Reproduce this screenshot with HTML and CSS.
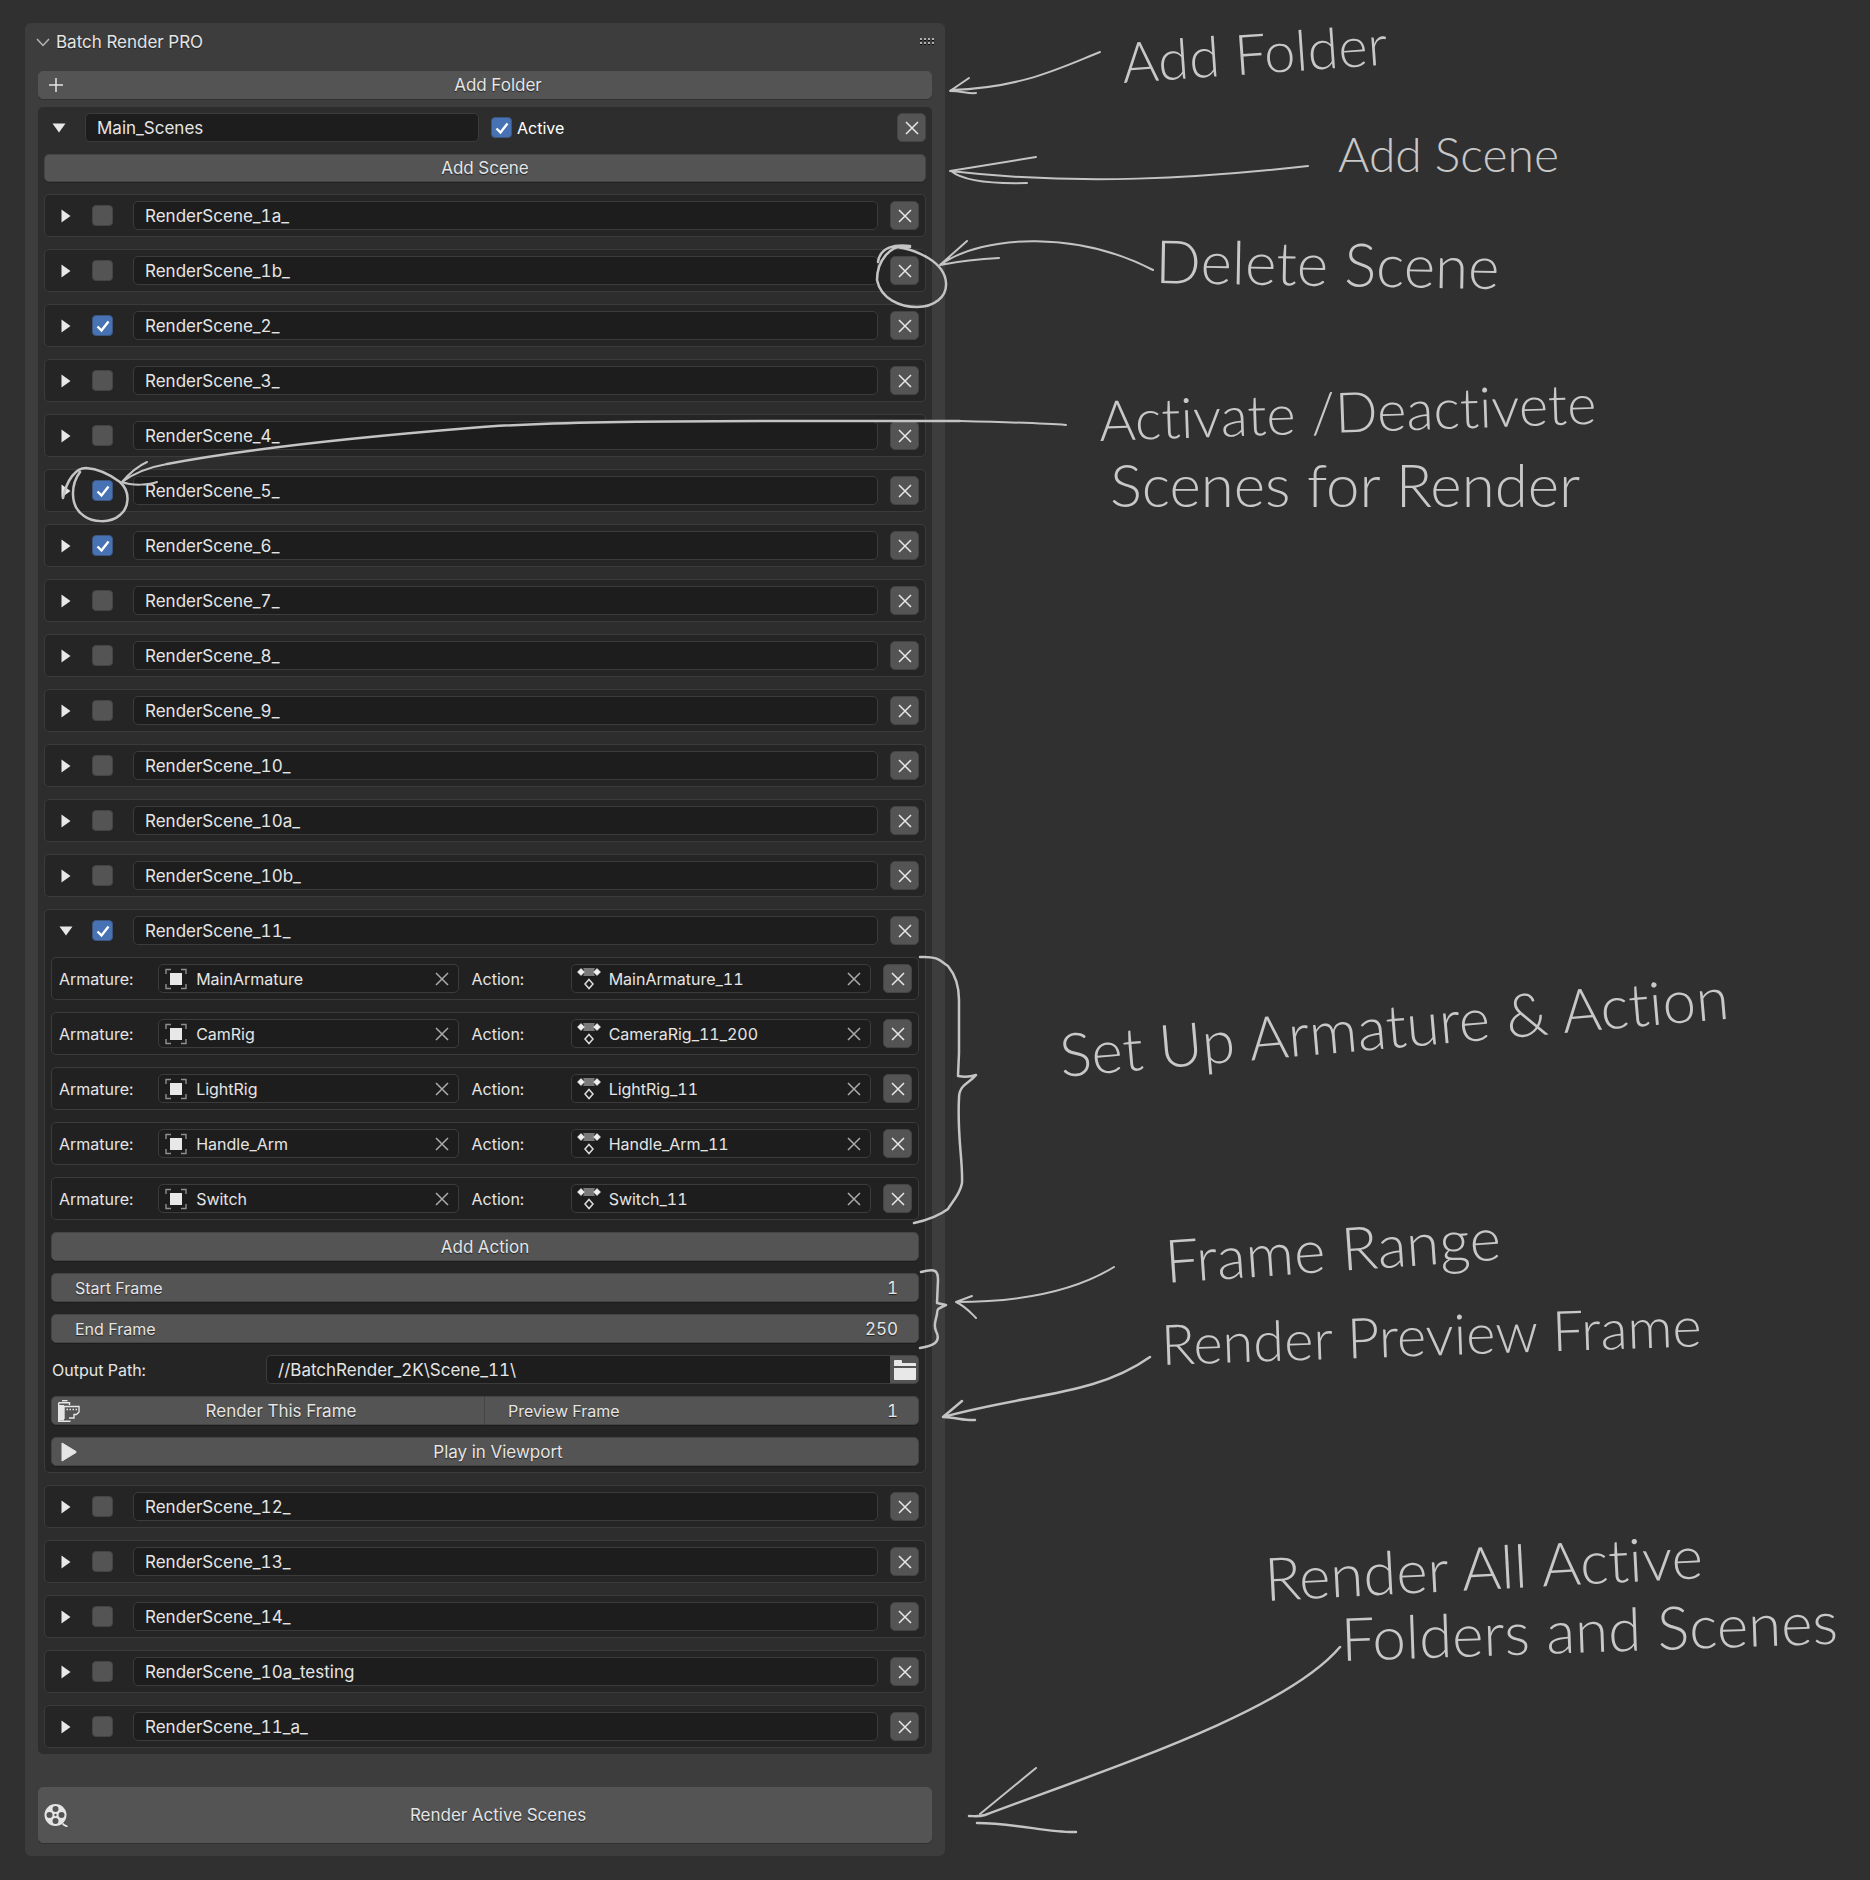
FILE: index.html
```html
<!DOCTYPE html>
<html lang="en">
<head>
<meta charset="utf-8">
<title>Batch Render PRO</title>
<meta name="viewport" content="width=device-width, initial-scale=1">
<link rel="stylesheet" href="styles.css">
</head>
<body>
<svg class="sprite" aria-hidden="true">
  <symbol id="x" viewBox="0 0 14 14"><path d="M1 1 13 13M13 1 1 13" fill="none" stroke="currentColor" stroke-width="1.5"/></symbol>
  <symbol id="right" viewBox="0 0 10 14"><path d="M.5 .5 9.5 7 .5 13.5Z" fill="currentColor"/></symbol>
  <symbol id="down" viewBox="0 0 14 10"><path d="M.5 .5H13.5L7 9.5Z" fill="currentColor"/></symbol>
  <symbol id="object" viewBox="0 0 24 22"><path d="M7 1.5H2V6M17 1.5h5V6M2 16v4.5h5M22 16v4.5h-5" fill="none" stroke="#8f8f8f" stroke-width="1.4"/><rect x="6" y="5" width="12" height="12" fill="#e8e8e8"/></symbol>
  <symbol id="action" viewBox="0 0 24 22"><path d="M6 0H18Q15.500 4 18 8H6Q8.500 4 6 0Z" fill="#7a7a7a"/><path d="M4 .5 7.500 4 4 7.500 .5 4ZM20 .5 23.500 4 20 7.500 16.500 4Z" fill="#f0f0f0" stroke="#f0f0f0" stroke-width=".6" stroke-linejoin="round"/><path d="M12 11.500 16 16 12 20.500 8 16Z" fill="none" stroke="#dcdcdc" stroke-width="1.500"/></symbol>
</svg>

<main class="workspace">
<section class="panel" aria-labelledby="panel-title">
  <header class="panel-header">
    <svg class="chevron" viewBox="0 0 14 9" aria-hidden="true"><path d="M1 1 7 7.500 13 1" fill="none" stroke="#b5b5b5" stroke-width="1.500"/></svg>
    <h1 class="panel-title" id="panel-title">Batch Render PRO</h1>
    <svg class="grip" viewBox="0 0 14 8" aria-hidden="true"><path d="M0 1h14M0 5h14" stroke="#b0b0b0" stroke-width="2" stroke-dasharray="2 2"/><path d="M0 2.500h14M0 6.500h14" stroke="#111" stroke-dasharray="2 2"/></svg>
  </header>

  <button class="button button-top with-icon" type="button"><span class="button-icon"><svg width="14" height="14" viewBox="0 0 14 14"><path d="M7 0V14M0 7H14" stroke="currentColor" stroke-width="1.500"/></svg></span><span class="button-text">Add Folder</span></button>

  <div class="folder">
    <div class="folder-header">
      <button class="toggle" type="button" aria-label="Collapse folder"><svg width="14" height="10"><use href="#down"/></svg></button>
      <input class="field" type="text" value="Main_Scenes" aria-label="Folder name">
      <label class="active"><input class="check" type="checkbox" checked>Active</label>
      <button class="remove" type="button" aria-label="Delete folder"><svg width="14" height="14"><use href="#x"/></svg></button>
    </div>
    <button class="button button-top" type="button"><span class="button-text">Add Scene</span></button>

    <div class="scene"><div class="scene-row"><button class="toggle" type="button" aria-label="Expand"><svg width="10" height="14"><use href="#right"/></svg></button><input class="check" type="checkbox" aria-label="Render scene"><input class="field" type="text" value="RenderScene_1a_" aria-label="Scene name"><button class="remove" type="button" aria-label="Delete scene"><svg width="14" height="14"><use href="#x"/></svg></button></div></div>
    <div class="scene"><div class="scene-row"><button class="toggle" type="button" aria-label="Expand"><svg width="10" height="14"><use href="#right"/></svg></button><input class="check" type="checkbox" aria-label="Render scene"><input class="field" type="text" value="RenderScene_1b_" aria-label="Scene name"><button class="remove" type="button" aria-label="Delete scene"><svg width="14" height="14"><use href="#x"/></svg></button></div></div>
    <div class="scene"><div class="scene-row"><button class="toggle" type="button" aria-label="Expand"><svg width="10" height="14"><use href="#right"/></svg></button><input class="check" type="checkbox" checked aria-label="Render scene"><input class="field" type="text" value="RenderScene_2_" aria-label="Scene name"><button class="remove" type="button" aria-label="Delete scene"><svg width="14" height="14"><use href="#x"/></svg></button></div></div>
    <div class="scene"><div class="scene-row"><button class="toggle" type="button" aria-label="Expand"><svg width="10" height="14"><use href="#right"/></svg></button><input class="check" type="checkbox" aria-label="Render scene"><input class="field" type="text" value="RenderScene_3_" aria-label="Scene name"><button class="remove" type="button" aria-label="Delete scene"><svg width="14" height="14"><use href="#x"/></svg></button></div></div>
    <div class="scene"><div class="scene-row"><button class="toggle" type="button" aria-label="Expand"><svg width="10" height="14"><use href="#right"/></svg></button><input class="check" type="checkbox" aria-label="Render scene"><input class="field" type="text" value="RenderScene_4_" aria-label="Scene name"><button class="remove" type="button" aria-label="Delete scene"><svg width="14" height="14"><use href="#x"/></svg></button></div></div>
    <div class="scene"><div class="scene-row"><button class="toggle" type="button" aria-label="Expand"><svg width="10" height="14"><use href="#right"/></svg></button><input class="check" type="checkbox" checked aria-label="Render scene"><input class="field" type="text" value="RenderScene_5_" aria-label="Scene name"><button class="remove" type="button" aria-label="Delete scene"><svg width="14" height="14"><use href="#x"/></svg></button></div></div>
    <div class="scene"><div class="scene-row"><button class="toggle" type="button" aria-label="Expand"><svg width="10" height="14"><use href="#right"/></svg></button><input class="check" type="checkbox" checked aria-label="Render scene"><input class="field" type="text" value="RenderScene_6_" aria-label="Scene name"><button class="remove" type="button" aria-label="Delete scene"><svg width="14" height="14"><use href="#x"/></svg></button></div></div>
    <div class="scene"><div class="scene-row"><button class="toggle" type="button" aria-label="Expand"><svg width="10" height="14"><use href="#right"/></svg></button><input class="check" type="checkbox" aria-label="Render scene"><input class="field" type="text" value="RenderScene_7_" aria-label="Scene name"><button class="remove" type="button" aria-label="Delete scene"><svg width="14" height="14"><use href="#x"/></svg></button></div></div>
    <div class="scene"><div class="scene-row"><button class="toggle" type="button" aria-label="Expand"><svg width="10" height="14"><use href="#right"/></svg></button><input class="check" type="checkbox" aria-label="Render scene"><input class="field" type="text" value="RenderScene_8_" aria-label="Scene name"><button class="remove" type="button" aria-label="Delete scene"><svg width="14" height="14"><use href="#x"/></svg></button></div></div>
    <div class="scene"><div class="scene-row"><button class="toggle" type="button" aria-label="Expand"><svg width="10" height="14"><use href="#right"/></svg></button><input class="check" type="checkbox" aria-label="Render scene"><input class="field" type="text" value="RenderScene_9_" aria-label="Scene name"><button class="remove" type="button" aria-label="Delete scene"><svg width="14" height="14"><use href="#x"/></svg></button></div></div>
    <div class="scene"><div class="scene-row"><button class="toggle" type="button" aria-label="Expand"><svg width="10" height="14"><use href="#right"/></svg></button><input class="check" type="checkbox" aria-label="Render scene"><input class="field" type="text" value="RenderScene_10_" aria-label="Scene name"><button class="remove" type="button" aria-label="Delete scene"><svg width="14" height="14"><use href="#x"/></svg></button></div></div>
    <div class="scene"><div class="scene-row"><button class="toggle" type="button" aria-label="Expand"><svg width="10" height="14"><use href="#right"/></svg></button><input class="check" type="checkbox" aria-label="Render scene"><input class="field" type="text" value="RenderScene_10a_" aria-label="Scene name"><button class="remove" type="button" aria-label="Delete scene"><svg width="14" height="14"><use href="#x"/></svg></button></div></div>
    <div class="scene"><div class="scene-row"><button class="toggle" type="button" aria-label="Expand"><svg width="10" height="14"><use href="#right"/></svg></button><input class="check" type="checkbox" aria-label="Render scene"><input class="field" type="text" value="RenderScene_10b_" aria-label="Scene name"><button class="remove" type="button" aria-label="Delete scene"><svg width="14" height="14"><use href="#x"/></svg></button></div></div>

    <div class="scene">
      <div class="scene-row"><button class="toggle" type="button" aria-label="Collapse"><svg width="14" height="10"><use href="#down"/></svg></button><input class="check" type="checkbox" checked aria-label="Render scene"><input class="field" type="text" value="RenderScene_11_" aria-label="Scene name"><button class="remove" type="button" aria-label="Delete scene"><svg width="14" height="14"><use href="#x"/></svg></button></div>

      <div class="binding">
        <div class="pair"><label for="arm1">Armature:</label><div class="picker"><svg width="24" height="22"><use href="#object"/></svg><input id="arm1" type="text" value="MainArmature"><button class="clear" type="button" aria-label="Clear"><svg width="14" height="14"><use href="#x"/></svg></button></div></div>
        <div class="pair"><label for="act1">Action:</label><div class="picker"><svg width="24" height="22"><use href="#action"/></svg><input id="act1" type="text" value="MainArmature_11"><button class="clear" type="button" aria-label="Clear"><svg width="14" height="14"><use href="#x"/></svg></button></div></div>
        <button class="remove" type="button" aria-label="Delete action"><svg width="14" height="14"><use href="#x"/></svg></button>
      </div>
      <div class="binding">
        <div class="pair"><label for="arm2">Armature:</label><div class="picker"><svg width="24" height="22"><use href="#object"/></svg><input id="arm2" type="text" value="CamRig"><button class="clear" type="button" aria-label="Clear"><svg width="14" height="14"><use href="#x"/></svg></button></div></div>
        <div class="pair"><label for="act2">Action:</label><div class="picker"><svg width="24" height="22"><use href="#action"/></svg><input id="act2" type="text" value="CameraRig_11_200"><button class="clear" type="button" aria-label="Clear"><svg width="14" height="14"><use href="#x"/></svg></button></div></div>
        <button class="remove" type="button" aria-label="Delete action"><svg width="14" height="14"><use href="#x"/></svg></button>
      </div>
      <div class="binding">
        <div class="pair"><label for="arm3">Armature:</label><div class="picker"><svg width="24" height="22"><use href="#object"/></svg><input id="arm3" type="text" value="LightRig"><button class="clear" type="button" aria-label="Clear"><svg width="14" height="14"><use href="#x"/></svg></button></div></div>
        <div class="pair"><label for="act3">Action:</label><div class="picker"><svg width="24" height="22"><use href="#action"/></svg><input id="act3" type="text" value="LightRig_11"><button class="clear" type="button" aria-label="Clear"><svg width="14" height="14"><use href="#x"/></svg></button></div></div>
        <button class="remove" type="button" aria-label="Delete action"><svg width="14" height="14"><use href="#x"/></svg></button>
      </div>
      <div class="binding">
        <div class="pair"><label for="arm4">Armature:</label><div class="picker"><svg width="24" height="22"><use href="#object"/></svg><input id="arm4" type="text" value="Handle_Arm"><button class="clear" type="button" aria-label="Clear"><svg width="14" height="14"><use href="#x"/></svg></button></div></div>
        <div class="pair"><label for="act4">Action:</label><div class="picker"><svg width="24" height="22"><use href="#action"/></svg><input id="act4" type="text" value="Handle_Arm_11"><button class="clear" type="button" aria-label="Clear"><svg width="14" height="14"><use href="#x"/></svg></button></div></div>
        <button class="remove" type="button" aria-label="Delete action"><svg width="14" height="14"><use href="#x"/></svg></button>
      </div>
      <div class="binding">
        <div class="pair"><label for="arm5">Armature:</label><div class="picker"><svg width="24" height="22"><use href="#object"/></svg><input id="arm5" type="text" value="Switch"><button class="clear" type="button" aria-label="Clear"><svg width="14" height="14"><use href="#x"/></svg></button></div></div>
        <div class="pair"><label for="act5">Action:</label><div class="picker"><svg width="24" height="22"><use href="#action"/></svg><input id="act5" type="text" value="Switch_11"><button class="clear" type="button" aria-label="Clear"><svg width="14" height="14"><use href="#x"/></svg></button></div></div>
        <button class="remove" type="button" aria-label="Delete action"><svg width="14" height="14"><use href="#x"/></svg></button>
      </div>

      <button class="button" type="button"><span class="button-text">Add Action</span></button>
      <label class="number">Start Frame<input type="number" value="1"></label>
      <label class="number">End Frame<input type="number" value="250"></label>
      <div class="output">
        <label class="output-label" for="output">Output Path:</label>
        <input class="field output-field" id="output" type="text" value="//BatchRender_2K\Scene_11\">
        <button class="remove browse" type="button" aria-label="Browse"><svg width="22" height="20" viewBox="0 0 22 20"><path d="M0 1Q0 0 1 0H7Q8 0 8 1V3H21Q22 3 22 4V6H0ZM0 8H22V19Q22 20 21 20H1Q0 20 0 19Z" fill="#e8e8e8"/></svg></button>
      </div>
      <div class="split">
        <button class="button with-icon" type="button"><span class="button-icon"><svg width="22" height="22" viewBox="0 0 22 22"><path d="M4 .7H9.500" stroke="currentColor" stroke-width="1.400"/><path d="M.7 2.700H11.500V5M6 19V6.500H21V12L18.500 14.500H16V18H11M.7 2.700V21.200H12.500" fill="none" stroke="currentColor" stroke-width="1.400"/><path d="M.5 5H6V20.500H.5Z" fill="currentColor"/><path d="M8.500 9.500H19" stroke="currentColor" stroke-width="1.500" stroke-dasharray="1.500 1.500"/></svg></span><span class="button-text">Render This Frame</span></button>
        <label class="number">Preview Frame<input type="number" value="1"></label>
      </div>
      <button class="button with-icon" type="button"><span class="button-icon"><svg width="16" height="20" viewBox="0 0 16 20"><path d="M1 1 15 9.500Q15.500 10 15 10.500L1 19Z" fill="currentColor" stroke="currentColor" stroke-linejoin="round"/></svg></span><span class="button-text">Play in Viewport</span></button>
    </div>

    <div class="scene"><div class="scene-row"><button class="toggle" type="button" aria-label="Expand"><svg width="10" height="14"><use href="#right"/></svg></button><input class="check" type="checkbox" aria-label="Render scene"><input class="field" type="text" value="RenderScene_12_" aria-label="Scene name"><button class="remove" type="button" aria-label="Delete scene"><svg width="14" height="14"><use href="#x"/></svg></button></div></div>
    <div class="scene"><div class="scene-row"><button class="toggle" type="button" aria-label="Expand"><svg width="10" height="14"><use href="#right"/></svg></button><input class="check" type="checkbox" aria-label="Render scene"><input class="field" type="text" value="RenderScene_13_" aria-label="Scene name"><button class="remove" type="button" aria-label="Delete scene"><svg width="14" height="14"><use href="#x"/></svg></button></div></div>
    <div class="scene"><div class="scene-row"><button class="toggle" type="button" aria-label="Expand"><svg width="10" height="14"><use href="#right"/></svg></button><input class="check" type="checkbox" aria-label="Render scene"><input class="field" type="text" value="RenderScene_14_" aria-label="Scene name"><button class="remove" type="button" aria-label="Delete scene"><svg width="14" height="14"><use href="#x"/></svg></button></div></div>
    <div class="scene"><div class="scene-row"><button class="toggle" type="button" aria-label="Expand"><svg width="10" height="14"><use href="#right"/></svg></button><input class="check" type="checkbox" aria-label="Render scene"><input class="field" type="text" value="RenderScene_10a_testing" aria-label="Scene name"><button class="remove" type="button" aria-label="Delete scene"><svg width="14" height="14"><use href="#x"/></svg></button></div></div>
    <div class="scene"><div class="scene-row"><button class="toggle" type="button" aria-label="Expand"><svg width="10" height="14"><use href="#right"/></svg></button><input class="check" type="checkbox" aria-label="Render scene"><input class="field" type="text" value="RenderScene_11_a_" aria-label="Scene name"><button class="remove" type="button" aria-label="Delete scene"><svg width="14" height="14"><use href="#x"/></svg></button></div></div>
  </div>

  <button class="button button-main with-icon" type="button"><span class="button-icon"><svg width="24" height="24" viewBox="0 0 24 24"><path fill-rule="evenodd" fill="currentColor" d="M11.500 1a11 11 0 1 0 0 22a11 11 0 1 0 0-22ZM11.500 3a3 3 0 1 1 0 6a3 3 0 1 1 0-6ZM11.500 15a3 3 0 1 1 0 6a3 3 0 1 1 0-6ZM5.500 9a3 3 0 1 1 0 6a3 3 0 1 1 0-6ZM17.500 9a3 3 0 1 1 0 6a3 3 0 1 1 0-6ZM11.500 10.800a1.200 1.200 0 1 1 0 2.400a1.200 1.200 0 1 1 0-2.400Z"/><path d="M18.500 20.500Q20 22.500 23.500 23.500" fill="none" stroke="currentColor" stroke-width="1.800"/></svg></span><span class="button-text">Render Active Scenes</span></button>
</section>
</main>

<svg class="ink" width="1870" height="1880" viewBox="0 0 1870 1880" aria-hidden="true">
  <g class="ink-thin">
    <path d="M1100 52C1062 67 1022 88 951 90M969 78 950 91C962 91 968 94 976 93"/>
    <path d="M1308 166C1200 178 1080 186 950 171L1036 157M951 171C962 180 990 184 1027 183"/>
    <path d="M1153 270C1080 232 985 233 940 265L967 241M940 265C955 262 975 259 999 258"/>
    <path d="M122 482C134 473 150 467 167 464M147 462C136 467 128 475 122 482C132 486 150 485 157 482"/>
    <path d="M1066 425C1040 423 1000 422 960 421"/>
    <path d="M1114 1267C1075 1291 1020 1302 956 1302L972 1296M956 1302C965 1306 970 1312 976 1318"/>
    <path d="M1036 1768 980 1814"/>
  </g>
  <g class="ink-bold">
    <path d="M878 262C880 247 895 244 910 246M910 247C890 242 877 262 877 280C881 299 900 307 917 307C934 307 947 297 946 283C945 262 917 250 897 247"/>
    <path d="M960 421C920 421 880 421 839 421C640 421 540 422 470 428C360 437 240 450 167 464"/>
    <path d="M63 498C67 479 76 468 86 468C100 469 112 476 120 482C131 492 129 508 120 515C110 524 92 522 84 516C69 506 71 484 80 472"/>
    <path d="M920 957C940 956 941 962 948 966C957 977 959 989 959 1000V1053L958 1076C964 1077 970 1077 976 1075C970 1083 959 1084 959 1098C957 1137 963 1160 962 1183C960 1195 951 1203 948 1209C940 1215 928 1220 914 1223"/>
    <path d="M921 1272C936 1268 938 1271 938 1280L937 1303 946 1305C937 1309 937 1309 937 1314C936 1320 933 1325 936 1331C942 1343 932 1346 920 1348"/>
    <path d="M1150 1357C1095 1396 1030 1393 943 1417L962 1401M943 1417C955 1417 965 1421 975 1420"/>
    <path d="M1340 1647C1285 1712 1110 1768 985 1815C978 1817 974 1816 969 1816M977 1823C1015 1823 1050 1833 1076 1832"/>
  </g>
</svg>

<aside class="notes" aria-label="Annotations">
  <p class="note note-folder">Add Folder</p>
  <p class="note note-scene">Add Scene</p>
  <p class="note note-delete">Delete Scene</p>
  <p class="note note-activate">Activate /Deactivete</p>
  <p class="note note-for-render">Scenes for Render</p>
  <p class="note note-setup">Set Up Armature &amp; Action</p>
  <p class="note note-range">Frame Range</p>
  <p class="note note-preview">Render Preview Frame</p>
  <p class="note note-all">Render All Active</p>
  <p class="note note-folders">Folders and Scenes</p>
</aside>
</body>
</html>
```
FILE: styles.css
```css
*, *::before, *::after { box-sizing: border-box; }

body {
  margin: 0;
  min-height: 100vh;
  position: relative;
  background: #303030;
  color: #e5e5e5;
  font: 400 16px/20px Inter, "Liberation Sans", sans-serif;
  font-variant-numeric: tabular-nums;
  overflow-x: hidden;
}

button, input { font: inherit; font-variant-numeric: inherit; color: inherit; margin: 0; }
button { padding: 0; border: 0; background: none; }
.sprite { display: none; }

.workspace {
  display: grid;
  grid-template-columns: minmax(640px, 920px) 1fr;
  padding: 23px 25px 24px;
}

/* Panel */
.panel {
  display: flex;
  flex-direction: column;
  padding: 0 13px 13px;
  border-radius: 6px;
  background: #3d3d3d;
}
.panel-header {
  display: flex;
  align-items: center;
  height: 38px;
  margin: 0 -2px 10px;
}
.chevron { width: 14px; height: 9px; }
.panel-title {
  margin: 0 auto 0 6px;
  font-size: 17px;
  font-weight: 400;
  text-shadow: 0 1px 1px #0008;
}
.grip { width: 14px; height: 8px; }

.folder {
  display: flex;
  flex-direction: column;
  gap: 12px;
  margin-top: 8px;
  padding: 6px;
  border-radius: 5px;
  background: #2d2d2d;
}
.folder-header {
  display: grid;
  grid-template-columns: 29px 1fr 1fr 29px;
  gap: 12px;
  align-items: center;
}
.active { display: flex; align-items: center; gap: 5px; color: #fff; }

.scene {
  display: flex;
  flex-direction: column;
  gap: 12px;
  padding: 6px;
  border: 1px solid #3b3b3b;
  border-radius: 5px;
  background: #252525;
}
.scene-row {
  display: grid;
  grid-template-columns: 29px 29px 1fr 29px;
  gap: 12px;
  align-items: center;
}

/* Controls */
.toggle { display: grid; place-items: center; height: 29px; color: #e8e8e8; }

.button {
  display: flex;
  align-items: center;
  height: 29px;
  border: 1px solid #444;
  border-radius: 5px;
  background: #545454;
  box-shadow: 0 1px 0 #0003;
  font-size: 17px;
  text-shadow: 0 1px 1px #0009;
}
.button-top { height: 28px; }
.button-main { height: 56px; margin-top: 33px; }
.panel > .button { border-color: #545454; }
.button-text { flex: 1; text-align: center; }
.with-icon { padding-right: 4px; }
.button-icon {
  display: grid;
  place-items: center;
  flex: 0 0 30px;
  padding-left: 3px;
}

.field {
  width: 100%;
  min-width: 0;
  height: 29px;
  padding: 0 11px;
  border: 1px solid #3b3b3b;
  border-radius: 5px;
  background: #1d1d1d;
  font-size: 17px;
}

.check {
  appearance: none;
  width: 21px;
  height: 21px;
  border: 1px solid #444;
  border-radius: 4px;
  background: #545454;
}
.check:checked {
  border-color: #3d5680;
  background: #4772b3 url("data:image/svg+xml,%3Csvg xmlns='http://www.w3.org/2000/svg' viewBox='0 0 18 18'%3E%3Cpath d='M3.500 9.500 7.500 13.500 14.500 4.500' fill='none' stroke='white' stroke-width='2.400'/%3E%3C/svg%3E") center / 18px 18px no-repeat;
}

.remove {
  display: grid;
  place-items: center;
  width: 29px;
  height: 29px;
  border: 1px solid #444;
  border-radius: 5px;
  background: #545454;
  color: #e8e8e8;
}

.binding {
  display: grid;
  grid-template-columns: 1fr 1fr 29px;
  gap: 12px;
  padding: 6px;
  border: 1px solid #3b3b3b;
  border-radius: 5px;
  background: #212121;
}
.pair {
  display: grid;
  grid-template-columns: 1fr 3fr;
  align-items: center;
}
.pair label { padding-left: 1px; }
.picker {
  display: flex;
  align-items: center;
  min-width: 0;
  height: 29px;
  padding: 0 9px 0 5px;
  border: 1px solid #3b3b3b;
  border-radius: 5px;
  background: #1d1d1d;
}
.picker > svg { flex: none; }
.picker input {
  flex: 1;
  min-width: 0;
  padding: 0 8px;
  border: 0;
  background: none;
}
.clear { display: grid; color: #aaa; }

.number {
  display: flex;
  align-items: center;
  justify-content: space-between;
  height: 29px;
  padding: 0 20px 0 23px;
  border: 1px solid #444;
  border-radius: 5px;
  background: #545454;
  box-shadow: 0 1px 0 #0003;
  text-shadow: 0 1px 1px #0009;
}
.number input {
  width: 96px;
  padding: 0;
  border: 0;
  background: none;
  font-size: 17px;
  text-align: right;
  text-shadow: inherit;
  appearance: textfield;
}
.number input::-webkit-inner-spin-button { appearance: none; margin: 0; }

.output { display: flex; align-items: center; }
.output-label { flex: 0 0 215px; padding-left: 1px; }
.output-field { flex: 1; border-right: 0; border-radius: 5px 0 0 5px; }
.browse { border-left-color: #545454; border-radius: 0 5px 5px 0; }

.split { display: grid; grid-template-columns: 1fr 1fr; }
.split .button { border-radius: 5px 0 0 5px; }
.split .number { border-left: 0; border-radius: 0 5px 5px 0; }

/* Annotation layer drawn over the canvas */
.ink {
  position: absolute;
  top: 0;
  left: 0;
  pointer-events: none;
  fill: none;
  stroke: #c4c4c4;
  stroke-linecap: round;
  stroke-linejoin: round;
}
.ink-thin { stroke-width: 2; }
.ink-bold { stroke-width: 2.5; }

.note {
  position: absolute;
  margin: 0;
  color: #c8c8c8;
  font: 300 60px/60px Lato, "Open Sans", sans-serif;
  font-variant-ligatures: none;
  white-space: nowrap;
  transform-origin: left bottom;
}
.note-folder { left: 1124px; top: 32px; font-size: 56px; transform: rotate(-4deg); }
.note-scene { left: 1338px; top: 124px; font-size: 48px; }
.note-delete { left: 1155px; top: 230px; transform: rotate(1deg); }
.note-activate { left: 1100px; top: 390px; font-size: 56px; transform: rotate(-2deg); }
.note-for-render { left: 1110px; top: 454px; }
.note-setup { left: 1062px; top: 1024px; transform: rotate(-5deg); }
.note-range { left: 1167px; top: 1230px; transform: rotate(-4deg); }
.note-preview { left: 1162px; top: 1314px; font-size: 56px; transform: rotate(-2deg); }
.note-all { left: 1266px; top: 1548px; transform: rotate(-3deg); }
.note-folders { left: 1342px; top: 1608px; transform: rotate(-2deg); }
```
